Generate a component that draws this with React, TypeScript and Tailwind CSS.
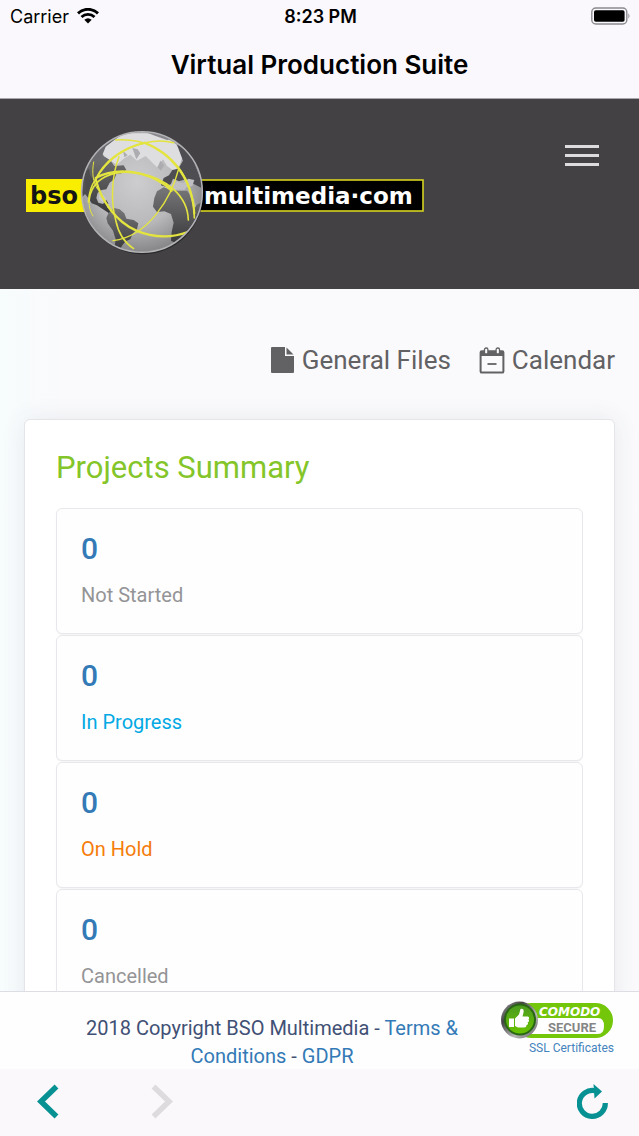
import React from "react";

const statuses = [
  { label: "Not Started", count: 0, color: "text-[#949496]" },
  { label: "In Progress", count: 0, color: "text-[#03a9e4]" },
  { label: "On Hold", count: 0, color: "text-[#f57c0a]" },
  { label: "Cancelled", count: 0, color: "text-[#949496]" },
];

function StatusBar() {
  return (
    <div className="flex h-8 items-center justify-between pl-[10px] pr-2 font-['Inter'] text-[18px] text-black">
      <span className="flex flex-1 items-center gap-2">
        Carrier
        <svg width="22" height="16" viewBox="0 0 22 16" fill="none">
          <path d="M1 5.4C6.6 0 15.4 0 21 5.4" stroke="#000" strokeWidth="3" />
          <path d="M4.5 9C8.2 5.4 13.8 5.4 17.5 9" stroke="#000" strokeWidth="2.8" />
          <path d="M7.3 11.8Q11 8.6 14.7 11.8L11 15.6Z" fill="#000" />
        </svg>
      </span>
      <span className="font-semibold">8:23 PM</span>
      <span className="flex flex-1 justify-end">
        <svg width="40" height="18" viewBox="0 0 40 18" fill="none">
          <rect x="0.8" y="1" width="35" height="16" rx="4" stroke="#8b898d" strokeWidth="1.4" />
          <rect x="3" y="3.3" width="30.6" height="11.4" rx="1.8" fill="#000" />
          <path d="M37.4 6.3Q39.5 9 37.4 11.7Z" fill="#8b898d" />
        </svg>
      </span>
    </div>
  );
}

function Logo() {
  return (
    <svg width="400" height="128" viewBox="24 129 400 128" role="img" aria-label="bso multimedia.com">
      <defs>
        <radialGradient id="sea" cx="46%" cy="42%" r="58%">
          <stop offset="0" stopColor="#cdcdd0" />
          <stop offset="0.6" stopColor="#b9b9bc" />
          <stop offset="1" stopColor="#88888b" />
        </radialGradient>
        <linearGradient id="land" x1="0" y1="0" x2="0" y2="1">
          <stop offset="0" stopColor="#77777a" />
          <stop offset="1" stopColor="#39393c" />
        </linearGradient>
        <clipPath id="globe">
          <circle cx="195" cy="198" r="180" />
        </clipPath>
      </defs>
      <rect x="26" y="179" width="80" height="33" fill="#f9ed00" />
      <text x="30" y="204" fontFamily="DejaVu Sans, sans-serif" fontWeight="700" fontSize="24" fill="#151515">
        bso
      </text>
      <rect x="160" y="180" width="263" height="31" fill="#000" stroke="#d6d321" strokeWidth="1.6" />
      <text x="204" y="204" fontFamily="DejaVu Sans, sans-serif" fontWeight="700" fontSize="23" fill="#fff">
        multimedia·com
      </text>
      <g transform="translate(77 126) scale(0.3333)">
        <ellipse cx="198" cy="204" rx="180" ry="181" fill="#2a2a2c" />
        <circle cx="195" cy="198" r="180" fill="url(#sea)" />
        <g clipPath="url(#globe)">
          {/* North America */}
          <path
            d="M14 215 18 150 36 100 62 68 82 92 98 100 112 120 140 118 148 132 134 142 118 144 112 160 98 170 88 190 74 192 62 200 58 216 64 230 78 234 88 222 94 232 90 244 104 256 96 262 78 250 60 238 44 232 34 216 24 204Z"
            fill="url(#land)"
          />
          <path d="M20 140 36 128 40 150 54 165 44 200 26 190Z" fill="#4c4c4f" />
          <path d="M66 205 80 208 88 220 76 228 66 220Z" fill="#c9c9cc" />
          {/* South America */}
          <path
            d="M94 262 112 246 128 250 142 262 148 278 170 282 184 292 180 310 168 322 160 340 146 346 136 358 128 372 112 368 116 340 108 314 92 292 88 276Z"
            fill="url(#land)"
          />
          {/* Greenland and the Arctic */}
          <path d="M66 66 104 34 160 22 210 22 262 32 296 54 320 84 308 118 292 136 270 120 258 100 240 124 224 108 206 90 180 104 160 86 140 98 120 116 98 102 82 90Z" fill="#dedee0" />
          <path d="M44 84 72 48 118 22 150 16 112 42 86 62 74 92 56 110Z" fill="#6b6b6f" />
          <path d="M166 66 178 100 190 82 182 70ZM138 74 152 88 142 94ZM250 104 262 118 252 134 242 124Z" fill="#adadb1" />
          <path d="M206 18 246 22 286 40 270 42 236 30Z" fill="#88888c" />
          {/* Europe and Asia */}
          <path d="M300 56 324 66 350 106 374 168 374 186 346 172 326 160 306 166 288 158 282 174 266 182 252 178 260 156 276 148 286 132 304 128 318 104Z" fill="#4e4e52" />
          <path d="M276 182 300 168 318 172 334 158 352 162 346 180 328 184 322 192 300 188 284 192Z" fill="#c0c0c4" />
          {/* Africa */}
          <path
            d="M240 196 260 184 282 192 304 194 330 194 346 212 354 240 374 228 372 262 350 314 328 346 302 354 282 344 284 318 290 290 282 264 262 256 240 258 228 242 232 216Z"
            fill="url(#land)"
          />
          <path d="M334 196 342 198 358 240 352 246Z" fill="#aeaeb2" />
          <g fill="none" stroke="#e3e43f" strokeLinecap="round">
            <path d="M34 228C36 196 44 176 56 160C92 98 148 62 206 50C236 43 264 44 290 50" strokeWidth="4.5" />
            <path d="M56 160C80 110 130 66 204 50" strokeWidth="6" />
            <path d="M116 42C196 36 262 68 304 124C336 166 352 218 352 276" strokeWidth="5" />
            <path d="M204 50C270 78 344 142 352 262" strokeWidth="6.5" />
            <path d="M36 226C42 158 106 128 186 142C266 156 332 208 334 282" strokeWidth="5" />
            <path d="M56 156C96 134 142 132 190 143C232 154 260 170 284 194" strokeWidth="7" />
            <path d="M56 160C72 224 118 288 178 314C234 338 292 334 332 318" strokeWidth="7" />
            <path d="M50 108C44 140 48 170 62 190" strokeWidth="3" />
            <path d="M126 92C102 154 102 232 116 282C124 322 142 350 170 368" strokeWidth="4.5" />
            <path d="M304 132C284 210 218 330 108 344" strokeWidth="4" />
            <path d="M36 226C36 244 40 258 48 270" strokeWidth="3" />
          </g>
        </g>
        <circle cx="195" cy="198" r="181" fill="none" stroke="#b4b4b8" strokeWidth="4.5" />
      </g>
    </svg>
  );
}

function ComodoBadge() {
  return (
    <svg width="114" height="40" viewBox="0 0 114 40" role="img" aria-label="Comodo Secure">
      <defs>
        <linearGradient id="ring" x1="0" y1="0" x2="1" y2="1">
          <stop offset="0" stopColor="#a5a5a5" />
          <stop offset="0.3" stopColor="#444" />
          <stop offset="0.65" stopColor="#b9b9b9" />
          <stop offset="1" stopColor="#555" />
        </linearGradient>
        <linearGradient id="green" x1="0" y1="0" x2="0" y2="1">
          <stop offset="0" stopColor="#4b9c20" />
          <stop offset="1" stopColor="#69c200" />
        </linearGradient>
      </defs>
      <rect x="14" y="3" width="99" height="35" rx="17.5" fill="#74c60b" />
      <path d="M28 18H98Q104 18 104 26T98 34H28Z" fill="#fff" />
      <text x="39" y="15.5" fontFamily="DejaVu Sans, sans-serif" fontWeight="700" fontStyle="italic" fontSize="12" fill="#fff">
        COMODO
      </text>
      <text x="48" y="31.5" fontFamily="Roboto, sans-serif" fontWeight="700" fontSize="13" fill="#858585">
        SECURE
      </text>
      <circle cx="19.5" cy="20" r="18.5" fill="url(#ring)" />
      <circle cx="20" cy="19.5" r="16" fill="#286614" />
      <circle cx="20" cy="19.5" r="14" fill="url(#green)" />
      <path
        d="M9 18.5H14V27H9ZM15 18.5 19 14.5 20.5 9Q24.5 8 23.5 12.5L22.5 16.5H28Q30 17.5 28.5 19.5Q30 21.5 27.5 22.5Q29 24.5 26.5 25Q26.5 27.5 24 27.5H18L15 26Z"
        fill="#fff"
      />
    </svg>
  );
}

function App() {
  return (
    <div className="flex h-screen flex-col overflow-hidden bg-[#fafafc] font-['Roboto',sans-serif]">
      <header className="shrink-0 border-b border-[#a9a7ab] bg-[#faf8fc]">
        <StatusBar />
        <h1 className="h-[66px] text-center font-['Inter'] text-[26px] font-semibold leading-[66px] text-black">
          Virtual Production Suite
        </h1>
      </header>

      <div className="flex h-[190px] shrink-0 items-start justify-between bg-[#434143] pl-6 pr-10 pt-[30px]">
        <Logo />
        <button aria-label="Menu" className="mt-4 flex flex-col gap-[6px]">
          <span className="h-[3px] w-[34px] bg-[#dedbde]"></span>
          <span className="h-[3px] w-[34px] bg-[#dedbde]"></span>
          <span className="h-[3px] w-[34px] bg-[#dedbde]"></span>
        </button>
      </div>

      <main className="min-h-0 flex-1 overflow-hidden bg-linear-to-r from-[#f7fcfd] to-[#fafafc] to-10% px-6">
        {/* Shortcuts */}
        <nav className="mt-[55px] flex h-8 items-center justify-end gap-7 text-[26px] leading-8 text-[#626164]">
          <a href="#files" className="flex items-center gap-[7px]">
            <svg width="24" height="26" viewBox="0 0 24 26" fill="currentColor">
              <path d="M1 0H14V9H23V25Q23 26 22 26H1Q0 26 0 25V1Q0 0 1 0Z" />
              <path d="M15.5 0.5 22.5 7.5H15.5Z" />
            </svg>
            General Files
          </a>
          <a href="#calendar" className="flex items-center gap-[7px]">
            <svg width="26" height="27" viewBox="0 0 26 27" fill="none" stroke="currentColor">
              <rect x="1.6" y="4.2" width="22.8" height="21.4" rx="1.2" strokeWidth="2" />
              <path d="M1.5 4H24.5V9H1.5Z" fill="currentColor" stroke="none" />
              <rect x="5.5" y="1" width="3.4" height="6" rx="1.6" fill="#fafafc" strokeWidth="1.3" />
              <rect x="17.1" y="1" width="3.4" height="6" rx="1.6" fill="#fafafc" strokeWidth="1.3" />
              <path d="M8.5 17H17.5" strokeWidth="1.8" />
            </svg>
            Calendar
          </a>
        </nav>

        <section className="mt-[43px] rounded-md border border-[#e4e5e8] bg-white px-[31px] pb-8 pt-7 shadow-[0_0_24px_rgba(60,70,90,0.09)]">
          <h2 className="text-[31px] leading-10 text-[#84c529]">Projects Summary</h2>
          <div className="mt-5 flex flex-col gap-px">
            {statuses.map((st) => {
              return (
                <a
                  href="#projects"
                  key={st.label}
                  className="flex flex-col gap-4 rounded-md border border-[#e8e8ec] bg-[#fefefe] px-6 pb-6 pt-6 shadow-[0_1px_1px_rgba(0,0,0,0.04)]"
                >
                  <span className="text-[30px] font-medium leading-8 text-[#337ab7]">{st.count}</span>
                  <span className={`text-[20px] leading-7 ${st.color}`}>{st.label}</span>
                </a>
              );
            })}
          </div>
        </section>
      </main>

      <footer className="flex h-[78px] shrink-0 items-start border-t border-[#dcdee4] bg-[#fefefe] pl-[72px] pr-[25px]">
        <p className="mt-[22px] flex-1 pr-[28px] text-center text-[20px] leading-7 text-[#415075]">
          2018 Copyright BSO Multimedia -{" "}
          <a href="#terms" className="text-[#337ab7]">
            Terms &amp; Conditions
          </a>{" "}
          -{" "}
          <a href="#gdpr" className="text-[#337ab7]">
            GDPR
          </a>
        </p>
        <a href="#ssl" className="mt-2 flex flex-col items-end text-[12px] leading-4 text-[#4483bd]">
          <ComodoBadge />
          SSL Certificates
        </a>
      </footer>

      {/* Browser controls */}
      <div className="flex h-[67px] shrink-0 items-start bg-[#faf8fb] pl-[37px] pr-[31px] pt-[15px]">
        <button aria-label="Back">
          <svg width="22" height="36" viewBox="0 0 22 36" fill="none">
            <path d="M19.5 2.5 4 17.5 19.5 32.5" stroke="#079192" strokeWidth="5.5" />
          </svg>
        </button>
        <button aria-label="Forward" disabled className="ml-[92px]">
          <svg width="22" height="36" viewBox="0 0 22 36" fill="none">
            <path d="M2.5 2.5 18 17.5 2.5 32.5" stroke="#dddbde" strokeWidth="5.5" />
          </svg>
        </button>
        <button aria-label="Reload" className="ml-auto">
          <svg width="31" height="36" viewBox="0 0 31 36" fill="none">
            <path d="M18 6.7A13 13 0 1 0 28.3 19" stroke="#079192" strokeWidth="5.2" />
            <path d="M16.5 0 25 7.5 17.5 14.5Z" fill="#079192" />
          </svg>
        </button>
      </div>
    </div>
  );
}

export default App;
